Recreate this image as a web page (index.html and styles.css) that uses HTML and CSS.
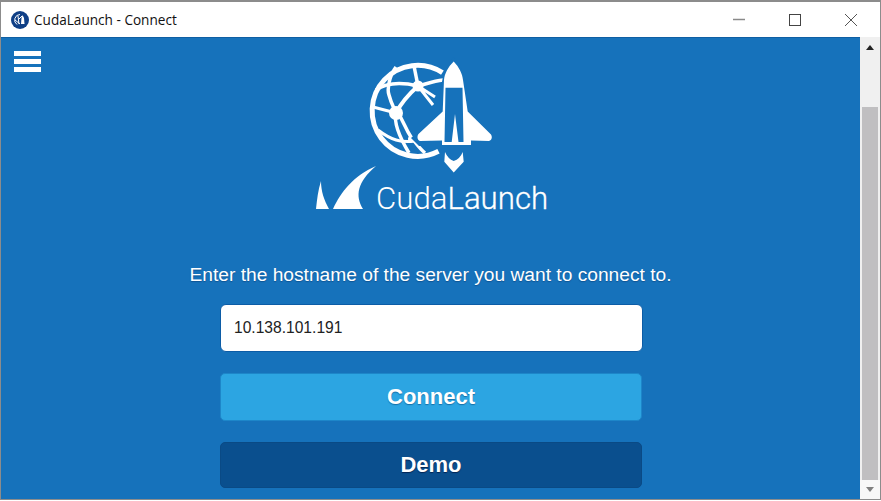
FILE: index.html
```html
<!DOCTYPE html>
<html lang="en">
<head>
	<meta charset="UTF-8">
	<title>CudaLaunch - Connect</title>
	<link rel="stylesheet" href="styles.css">
</head>
<body>
<div class="window">
	<!-- title bar -->
	<div class="titlebar">
		<svg class="app-icon" width="18" height="18" viewBox="0 0 18 18">
			<circle cx="9" cy="9" r="9" fill="#0f3f86"/>
			<path d="M9 3.500a5.500 5.500 0 0 0-3 10M7 5l1 8M4 9l5 4M8 8l3-3" fill="none" stroke="#fff" stroke-width="1"/>
			<path d="M11.500 4l1.500 3 .5 6h-3.500l.5-6z" fill="#fff"/>
		</svg>
		<span class="title">CudaLaunch - Connect</span>
		<div class="controls">
			<svg width="14" height="14" viewBox="0 0 14 14"><path d="M1 6.500h12" stroke="#8a8a8a" stroke-width="1.500"/></svg>
			<svg width="14" height="14" viewBox="0 0 14 14"><rect x="1.500" y="1.500" width="11" height="11" fill="none" stroke="#444" stroke-width="1"/></svg>
			<svg width="14" height="14" viewBox="0 0 14 14"><path d="M1 1l12 12M13 1L1 13" stroke="#555" stroke-width="1"/></svg>
		</div>
	</div>

	<div class="body">
		<div class="main">
			<div class="top">
				<div class="menu"><span></span><span></span><span></span></div>
				<!-- coordinates of the logo are in page pixels, see viewBox -->
				<svg class="logo" width="260" height="170" viewBox="300 50 260 170">
					<g fill="none" stroke="#fff">
						<path d="M441.400 72.700A45.500 45.500 0 1 0 437.500 151.300" stroke-width="5"/>
						<path d="M395 67C388 76 386 90 388 95C390 103 393 108 395 113" stroke-width="3.500"/>
						<path d="M375 90C385 83 400 82 417 86C425 84 433 81 442 80" stroke-width="3.500"/>
						<path d="M413 66L417 86" stroke-width="3.500"/>
						<path d="M417 86C408 94 400 103 395 113" stroke-width="4"/>
						<path d="M395 113C392 125 402 143 408 153" stroke-width="3.500"/>
						<path d="M397 113C403 122 404 128 410 137C415 143 418 148 424 153" stroke-width="3.500"/>
						<path d="M377 130C390 140 400 143 414 141" stroke-width="3"/>
						<path d="M372 107L395 113" stroke-width="3"/>
						<path d="M417 86L434 97M417 86L432 105" stroke-width="3"/>
					</g>
					<g fill="#fff">
						<circle cx="395" cy="113" r="7"/>
						<circle cx="417" cy="86" r="5.500"/>
						<circle cx="410" cy="139" r="3"/>
					</g>
					<!-- rocket -->
					<path fill="#1672bb" d="M452.700 57C444 66 439 80 438 112L410 138L418 146H487L495 138L468 112C467 80 461 66 452.700 57Z"/>
					<path fill="#fff" d="M452.700 61.500C447 67 443.500 74 443 80L441.700 111.500L417.500 134C416 136 416 140 419 141L441 140.500V145H470V140.500L488 141C491 140 491.500 137 490 134.500L466.700 111.500L462 80C461.500 74 458 67 452.700 61.500Z"/>
					<path fill="#1672bb" d="M444.500 87.700H461.500L462.500 142H457.500L454 114L450.700 142H443.500Z"/>
					<path fill="#fff" d="M444 152Q447 159 452.700 161Q459 159 461.700 152L462.700 161.700L452.700 172.500L443.300 161.700Z"/>
					<!-- barracuda fins -->
					<path fill="#fff" d="M320 181C317 190 316 200 315 209H328C323 200 320 191 320 181Z"/>
					<path fill="#fff" d="M375 166C352 176 340 192 332 209H362C354 196 356 182 375 166Z"/>
					<text class="wordmark" x="375" y="209">Cuda<tspan class="wordmark-b">Launch</tspan></text>
				</svg>
			</div>

			<p class="prompt">Enter the hostname of the server you want to connect to.</p>
			<input class="host" type="text" value="10.138.101.191">
			<button class="btn btn-connect">Connect</button>
			<button class="btn btn-demo">Demo</button>
		</div>

		<!-- scrollbar -->
		<div class="scrollbar">
			<div class="arrow arrow-up"></div>
			<div class="thumb"></div>
			<div class="arrow arrow-down"></div>
		</div>
	</div>
</div>
</body>
</html>
```

FILE: styles.css
```css
* {
    margin: 0;
    padding: 0;
    box-sizing: border-box;
}

html, body {
    width: 881px;
    height: 501px;
    overflow: hidden;
    background-color: #fff;
}

.window {
    width: 881px;
    height: 500px;
    display: flex;
    flex-direction: column;
    border: 1px solid #8c8c8c;
    border-top-width: 2px;
    font-family: "Liberation Sans", Arial, sans-serif;
}

.titlebar {
    height: 35px;
    flex: none;
    display: flex;
    align-items: center;
    padding: 0 22px 0 10px;
    background-color: #fff;
}

.app-icon {
    flex: none;
}

.title {
    margin-left: 5px;
    font-family: "Open Sans", "Noto Sans", sans-serif;
    font-size: 13.600px;
    color: #111;
}

.controls {
    margin-left: auto;
    display: flex;
    gap: 42px;
}

.body {
    flex: 1;
    display: flex;
    min-height: 0;
}

.main {
    flex: 1;
    display: flex;
    flex-direction: column;
    align-items: center;
    background-color: #1672bb;
    border-top: 1px solid #0f5fa3;
}

.top {
    width: 100%;
    height: 218px;
    display: grid;
}

.menu {
    grid-area: 1 / 1;
    justify-self: start;
    margin: 13px 0 0 13px;
    width: 27px;
    height: 21px;
    display: flex;
    flex-direction: column;
    justify-content: space-between;
}

.menu span {
    height: 5px;
    background-color: #fff;
}

.logo {
    grid-area: 1 / 1;
    justify-self: center;
    margin-top: 12px;
}

.wordmark {
    font-family: Roboto, "Liberation Sans", sans-serif;
    font-weight: 300;
    font-size: 31.200px;
    fill: #fff;
}

.wordmark-b {
    stroke: #fff;
    stroke-width: 0.300px;
}

.prompt {
    margin-top: 7px;
    font-size: 19.200px;
    line-height: 24px;
    color: #fff;
    text-shadow: 0 1px 1px rgba(0, 40, 90, 0.4);
}

.host {
    width: 423px;
    height: 48px;
    margin-top: 17px;
    margin-left: 2px;
    padding: 0 13px;
    font-family: "Liberation Sans", Arial, sans-serif;
    font-size: 15.600px;
    color: #222;
    background-color: #fff;
    border: 1px solid #0c5ca6;
    border-radius: 6px;
}

.btn {
    width: 422px;
    margin-left: 2px;
    margin-right: 1px;
    font-family: "Liberation Sans", Arial, sans-serif;
    font-weight: bold;
    font-size: 22px;
    color: #fff;
    border-radius: 5px;
}

.btn-connect {
    height: 48px;
    margin-top: 21px;
    background-color: #2ca5e2;
    border: 1px solid #1d86c9;
    text-shadow: 0 1px 1px rgba(0, 60, 110, 0.5);
}

.btn-demo {
    height: 46px;
    margin-top: 21px;
    background-color: #0a4f8e;
    border: 1px solid #0a4a85;
    text-shadow: 0 1px 1px rgba(0, 20, 60, 0.7);
}

.scrollbar {
    width: 20px;
    flex: none;
    display: flex;
    flex-direction: column;
    align-items: center;
    background-color: #f0f0f0;
}

.arrow {
    flex: none;
    width: 100%;
    display: flex;
    align-items: center;
    justify-content: center;
}

.arrow::before {
    content: "";
    border-left: 4.500px solid transparent;
    border-right: 4.500px solid transparent;
}

.arrow-up {
    height: 70px;
    padding-bottom: 50px;
}

.arrow-up::before {
    border-bottom: 5px solid #222;
}

.arrow-down {
    height: 19px;
    background-color: #f8f8f8;
}

.arrow-down::before {
    border-top: 5px solid #808080;
}

.thumb {
    flex: 1;
    width: 16px;
    background-color: #c0bfc1;
}
```
